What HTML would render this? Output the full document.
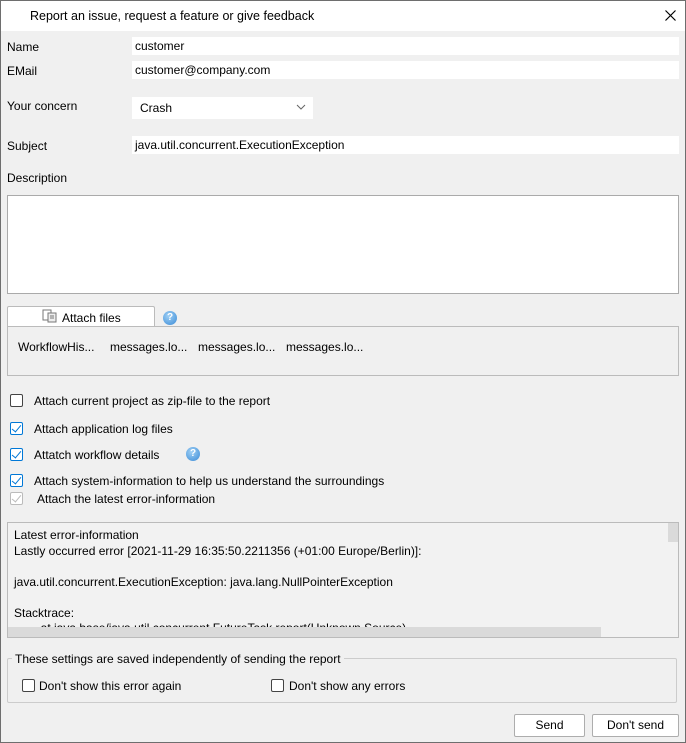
<!DOCTYPE html>
<html><head><meta charset="utf-8"><style>
*{box-sizing:border-box;margin:0;padding:0}
body{width:686px;height:743px;background:#f0f0f0;font-family:"Liberation Sans",sans-serif;font-size:12px;color:#000;position:relative;overflow:hidden}
.a{position:absolute;white-space:nowrap}
.in{position:absolute;background:#fff;height:18px;padding-left:3px;line-height:19px}
.cb{position:absolute;width:13px;height:13px;border:1px solid #333;background:#fff;border-radius:2px}
.cb.on{border-color:#0078d7}
.cb.on::after{content:"";position:absolute;left:3px;top:0px;width:4px;height:8px;border:solid #0078d7;border-width:0 1.5px 1.5px 0;transform:rotate(40deg)}
.cb.dis{border-color:#bbb}
.cb.dis::after{content:"";position:absolute;left:3px;top:0px;width:4px;height:8px;border:solid #bbb;border-width:0 1.5px 1.5px 0;transform:rotate(40deg)}
.help{position:absolute;width:14px;height:14px;border-radius:50%;background:radial-gradient(circle at 40% 35%,#9fd0f5,#3a8ad6);color:#fff;font-weight:bold;font-size:10px;text-align:center;line-height:14px}
.btn{position:absolute;background:#fff;border:1px solid #adadad;border-radius:2px;text-align:center;line-height:21px}
</style></head><body>
<div class="a" style="left:0;top:0;width:686px;height:743px;border:1px solid #6e6e6e"></div>
<div class="a" style="left:1px;top:1px;width:684px;height:30px;background:#fff"></div>
<div class="a" style="left:30px;top:9px;font-size:12.5px">Report an issue, request a feature or give feedback</div>
<svg class="a" style="left:665px;top:10px" width="11" height="11"><path d="M0.5 0.5L10.5 10.5M10.5 0.5L0.5 10.5" stroke="#000" stroke-width="1.2"/></svg>

<div class="a" style="left:7px;top:40px">Name</div>
<div class="in" style="left:132px;top:37px;width:547px">customer</div>
<div class="a" style="left:7px;top:64px">EMail</div>
<div class="in" style="left:132px;top:61px;width:547px">customer@company.com</div>
<div class="a" style="left:7px;top:99px">Your concern</div>
<div class="in" style="left:132px;top:97px;width:181px;height:22px;line-height:23px;padding-left:8px">Crash</div>
<svg class="a" style="left:296px;top:104px" width="10" height="7"><path d="M1 1 L5 5 L9 1" stroke="#666" fill="none"/></svg>
<div class="a" style="left:7px;top:139px">Subject</div>
<div class="in" style="left:132px;top:136px;width:547px">java.util.concurrent.ExecutionException</div>
<div class="a" style="left:7px;top:171px">Description</div>
<div class="a" style="left:7px;top:195px;width:672px;height:99px;background:#fff;border:1px solid #aaa"></div>

<div class="a" style="left:7px;top:306px;width:148px;height:21px;background:#fff;border:1px solid #bbb;border-bottom:none;border-radius:2px 2px 0 0"></div>
<svg class="a" style="left:42px;top:309px" width="16" height="14"><rect x="1" y="1" width="8" height="10" fill="#fff" stroke="#777"/><rect x="6" y="4" width="8" height="9" fill="#eee" stroke="#777"/><path d="M8 7h4M8 9h4" stroke="#777"/></svg>
<div class="a" style="left:62px;top:311px">Attach files</div>
<div class="help" style="left:163px;top:311px">?</div>
<div class="a" style="left:7px;top:326px;width:672px;height:50px;border:1px solid #bbb;background:#f0f0f0"></div>
<div class="a" style="left:18px;top:340px">WorkflowHis...</div>
<div class="a" style="left:110px;top:340px">messages.lo...</div>
<div class="a" style="left:198px;top:340px">messages.lo...</div>
<div class="a" style="left:286px;top:340px">messages.lo...</div>

<div class="cb" style="left:10px;top:394px;border-color:#444"></div>
<div class="a" style="left:34px;top:394px">Attach current project as zip-file to the report</div>
<div class="cb on" style="left:10px;top:422px"></div>
<div class="a" style="left:34px;top:422px">Attach application log files</div>
<div class="cb on" style="left:10px;top:448px"></div>
<div class="a" style="left:34px;top:448px">Attatch workflow details</div>
<div class="help" style="left:186px;top:447px">?</div>
<div class="cb on" style="left:10px;top:474px"></div>
<div class="a" style="left:34px;top:474px">Attach system-information to help us understand the surroundings</div>
<div class="cb dis" style="left:10px;top:492px"></div>
<div class="a" style="left:37px;top:492px">Attach the latest error-information</div>

<div class="a" style="left:7px;top:522px;width:672px;height:116px;border:1px solid #bbb;background:#f2f2f2;overflow:hidden">
<div style="position:absolute;left:6px;top:5px;line-height:15.5px">Latest error-information<br>Lastly occurred error [2021-11-29 16:35:50.2211356 (+01:00 Europe/Berlin)]:<br><br>java.util.concurrent.ExecutionException: java.lang.NullPointerException<br><br>Stacktrace:<br>&nbsp;&nbsp;&nbsp;&nbsp;&nbsp;&nbsp;&nbsp;&nbsp;at java.base/java.util.concurrent.FutureTask.report(Unknown Source)</div>
<div style="position:absolute;left:0;top:104px;width:670px;height:11px;background:#f2f2f2"></div>
<div style="position:absolute;left:0;top:104px;width:593px;height:11px;background:#dadada"></div>
<div style="position:absolute;left:659px;top:0;width:12px;height:104px;background:#f2f2f2"></div>
<div style="position:absolute;left:660px;top:0;width:11px;height:19px;background:#dadada"></div>
</div>

<div class="a" style="left:7px;top:658px;width:670px;height:45px;border:1px solid #ccc;border-radius:2px"></div>
<div class="a" style="left:12px;top:652px;background:#f0f0f0;padding:0 3px">These settings are saved independently of sending the report</div>
<div class="cb" style="left:22px;top:679px;border-color:#444"></div>
<div class="a" style="left:39px;top:679px">Don't show this error again</div>
<div class="cb" style="left:271px;top:679px;border-color:#444"></div>
<div class="a" style="left:289px;top:679px">Don't show any errors</div>

<div class="btn" style="left:514px;top:714px;width:71px;height:23px">Send</div>
<div class="btn" style="left:592px;top:714px;width:87px;height:23px">Don't send</div>
</body></html>
